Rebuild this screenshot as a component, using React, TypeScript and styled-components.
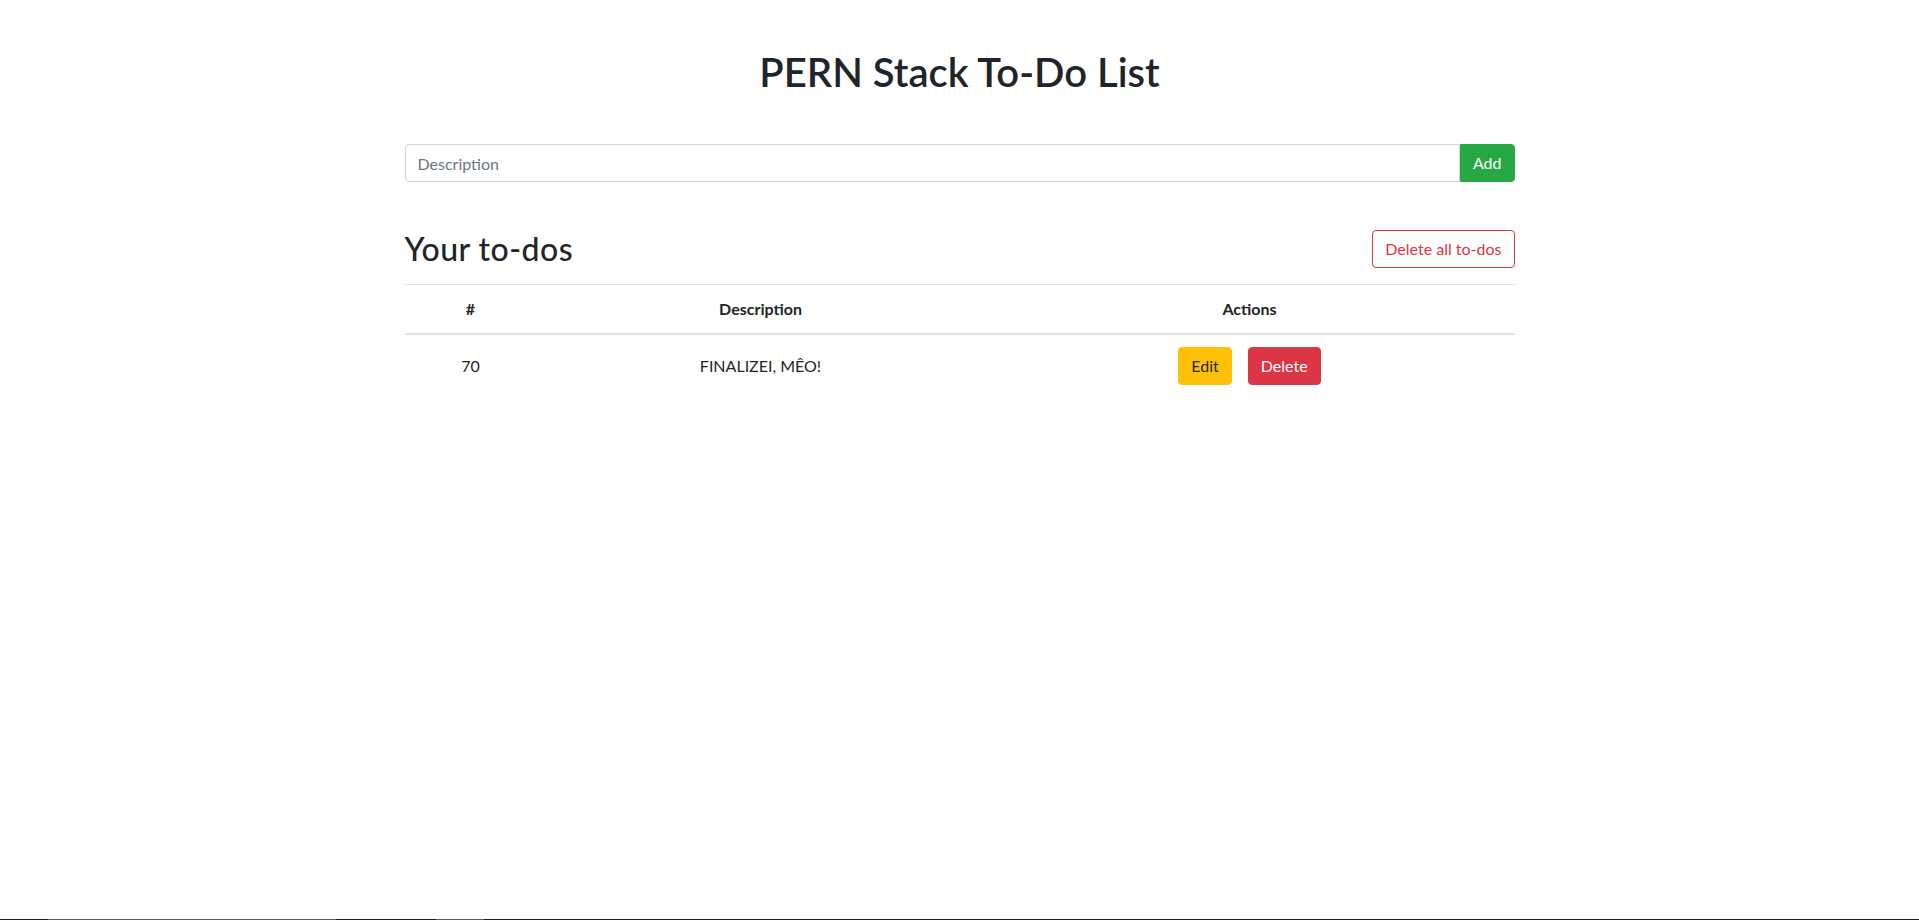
import React from "react";
import styled, { createGlobalStyle } from "styled-components";

const GlobalStyle = createGlobalStyle`
  *, *::before, *::after { box-sizing: border-box; }
  html, body { margin: 0; padding: 0; background: #fff; }
  body {
    font-family: Lato, "Open Sans", sans-serif;
    font-size: 16px;
    line-height: 1.5;
    color: #212529;
  }
`;

const Container = styled.div`
  width: 1140px;
  margin: 0 auto;
  padding: 0 15px;
`;

const Title = styled.h1`
  margin: 48px 0 0;
  font-size: 40px;
  font-weight: 600;
  line-height: 1.2;
  text-align: center;
`;

const AddForm = styled.form`
  display: flex;
  margin-top: 48px;
`;

const Input = styled.input`
  flex: 1;
  height: 38px;
  padding: 6px 12px;
  font: inherit;
  font-size: 16px;
  color: #495057;
  border: 1px solid #ced4da;
  border-radius: 4px 0 0 4px;
  outline: none;
  &::placeholder { color: #6c757d; }
`;

const Button = styled.button<{ $variant: "success" | "warning" | "danger" | "outline-danger" }>`
  height: 38px;
  padding: 6px 12px;
  font: inherit;
  font-size: 16px;
  line-height: 1.5;
  border-radius: 4px;
  border: 1px solid;
  cursor: pointer;
  ${({ $variant }) => {
    switch ($variant) {
      case "success":
        return "background:#28a745;border-color:#28a745;color:#fff;";
      case "warning":
        return "background:#ffc107;border-color:#ffc107;color:#212529;";
      case "danger":
        return "background:#dc3545;border-color:#dc3545;color:#fff;";
      default:
        return "background:#fff;border-color:#dc3545;color:#dc3545;";
    }
  }}
`;

const AddButton = styled(Button)`
  border-radius: 0 4px 4px 0;
`;

const ListHeader = styled.div`
  display: flex;
  justify-content: space-between;
  align-items: center;
  margin-top: 48px;
  margin-bottom: 16px;
`;

const SubTitle = styled.h2`
  margin: 0;
  font-size: 32px;
  font-weight: 500;
  line-height: 1.2;
  letter-spacing: 0.45px;
`;

const Table = styled.table`
  width: 100%;
  border-collapse: collapse;
  color: #212529;
`;

const Th = styled.th<{ $w?: number }>`
  width: ${({ $w }) => ($w ? `${$w}px` : "auto")};
  padding: 12px;
  text-align: center;
  font-weight: 700;
  border-top: 1px solid #dee2e6;
  border-bottom: 2px solid #dee2e6;
  vertical-align: bottom;
`;

const Td = styled.td`
  padding: 12px;
  text-align: center;
  vertical-align: top;
  line-height: 38px;
`;

const ActionButton = styled(Button)`
  margin: 0 8px;
  vertical-align: top;
`;

const TaskbarEdge = styled.div`
  position: fixed;
  left: 0;
  right: 0;
  bottom: 0;
  height: 1px;
  background: linear-gradient(
    to right,
    #1e1e1e 0 48px,
    #5c5c5c 48px 336px,
    #1e1e1e 336px 436px,
    #5c5c5c 436px 484px,
    #1e1e1e 484px 100%
  );
`;

export default function App() {
  return (
    <>
      <GlobalStyle />
      <Container>
        <Title>PERN Stack To-Do List</Title>
        <AddForm onSubmit={(e) => e.preventDefault()}>
          <Input type="text" placeholder="Description" />
          <AddButton $variant="success" type="submit">Add</AddButton>
        </AddForm>
        <ListHeader>
          <SubTitle>Your to-dos</SubTitle>
          <Button $variant="outline-danger" type="button">Delete all to-dos</Button>
        </ListHeader>
        <Table>
          <thead>
            <tr>
              <Th $w={132}>#</Th>
              <Th $w={448}>Description</Th>
              <Th>Actions</Th>
            </tr>
          </thead>
          <tbody>
            <tr>
              <Td>70</Td>
              <Td>FINALIZEI, MÊO!</Td>
              <Td>
                <ActionButton $variant="warning" type="button">Edit</ActionButton>
                <ActionButton $variant="danger" type="button">Delete</ActionButton>
              </Td>
            </tr>
          </tbody>
        </Table>
      </Container>
      <TaskbarEdge />
    </>
  );
}
